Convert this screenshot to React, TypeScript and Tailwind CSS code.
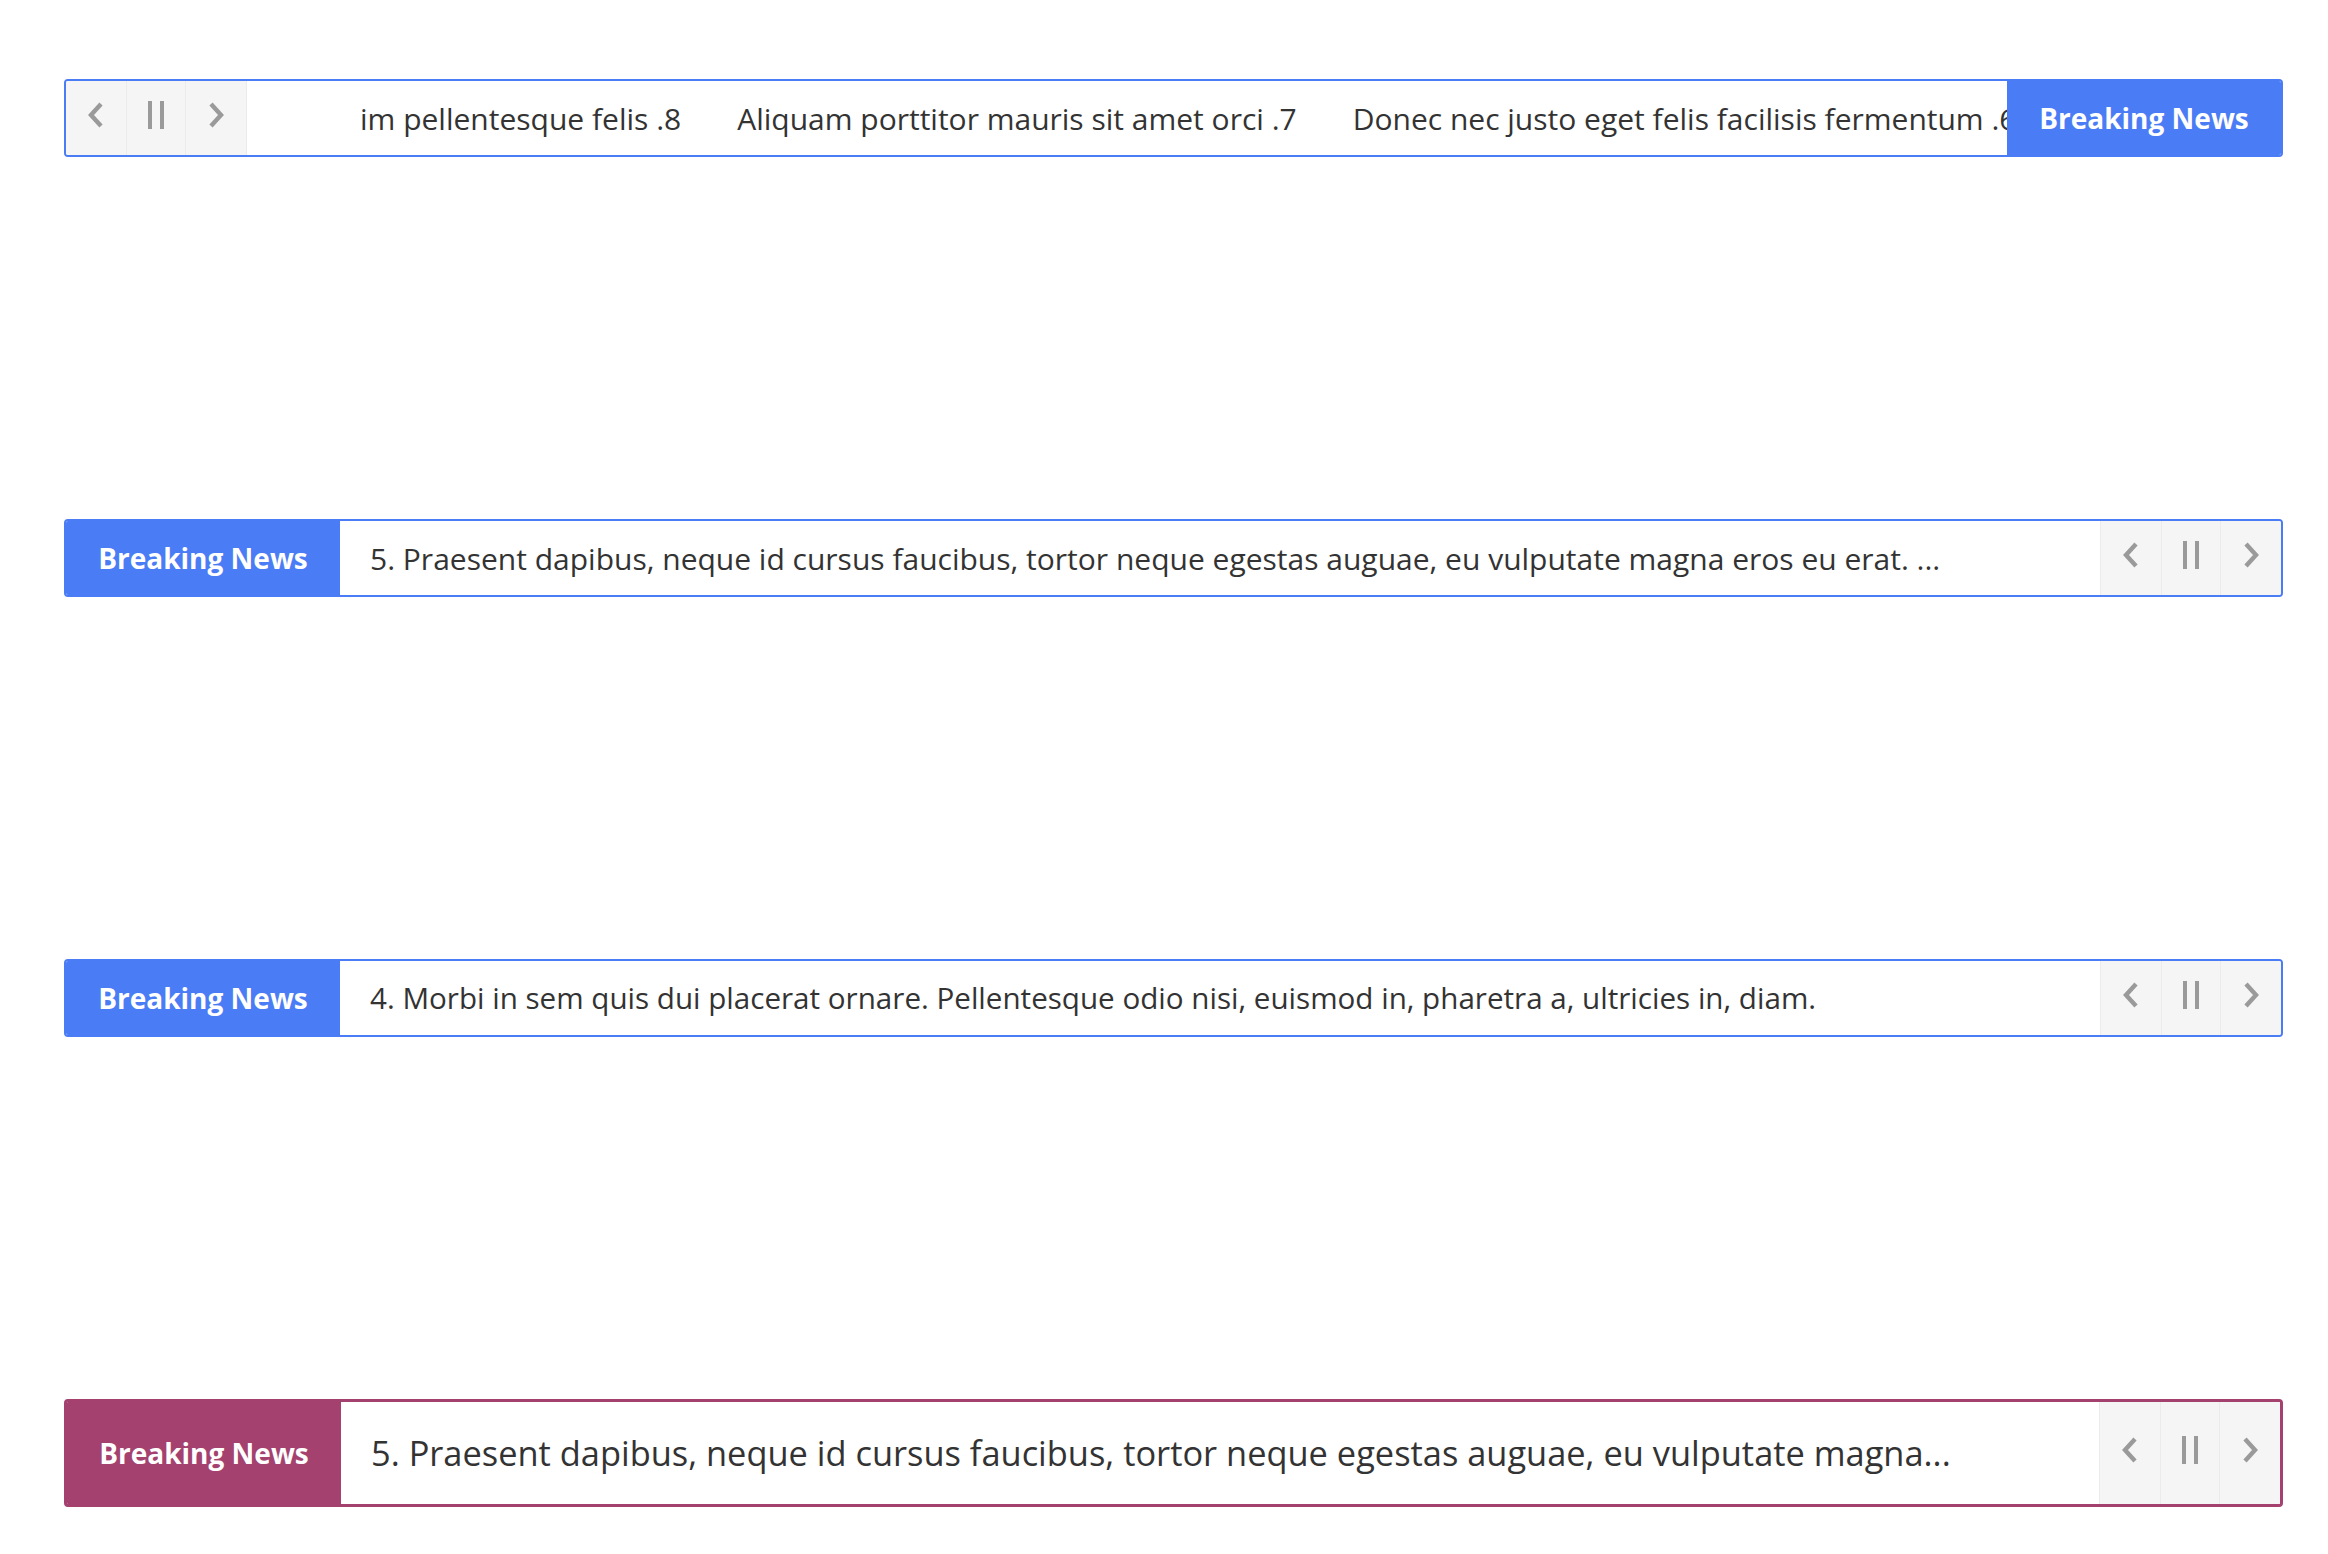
import type { ReactNode } from 'react';

const FONT = { fontFamily: '"Open Sans", "Noto Sans", sans-serif' };

function ChevronLeft() {
  return (
    <svg width="16" height="26" viewBox="0 0 16 26" fill="none">
      <polyline points="13,2 3,13 13,24" stroke="#9a9a9a" strokeWidth="4.4" />
    </svg>
  );
}

function ChevronRight() {
  return (
    <svg width="16" height="26" viewBox="0 0 16 26" fill="none">
      <polyline points="3,2 13,13 3,24" stroke="#9a9a9a" strokeWidth="4.4" />
    </svg>
  );
}

function PauseIcon() {
  return (
    <svg width="16" height="28" viewBox="0 0 16 28">
      <rect x="0" y="0" width="4" height="28" fill="#9a9a9a" />
      <rect x="12" y="0" width="4" height="28" fill="#9a9a9a" />
    </svg>
  );
}

function Controls({ side }: { side: 'left' | 'right' }) {
  return (
    <div
      className={`flex h-full shrink-0 bg-[#f5f5f5] ${
        side === 'right' ? 'border-l border-[#ebebeb]' : 'border-r border-[#ebebeb]'
      }`}
    >
      <button type="button" className="flex h-full w-[60px] items-center justify-center pb-[6px]">
        <ChevronLeft />
      </button>
      <button
        type="button"
        className="flex h-full w-[60px] items-center justify-center border-x border-[#ebebeb] pb-[6px]"
      >
        <PauseIcon />
      </button>
      <button type="button" className="flex h-full w-[60px] items-center justify-center pb-[6px]">
        <ChevronRight />
      </button>
    </div>
  );
}

function Label({ bg }: { bg: string }) {
  return (
    <div
      className={`flex h-full w-[274px] shrink-0 items-center justify-center text-[28px] font-bold text-white ${bg}`}
    >
      Breaking News
    </div>
  );
}

type TickerProps = {
  frame: string;
  children: ReactNode;
};

function Ticker({ frame, children }: TickerProps) {
  return (
    <div className={`flex w-full overflow-hidden rounded-[4px] bg-white ${frame}`}>{children}</div>
  );
}

export default function App() {
  return (
    <div className="min-h-[1554px] w-full bg-white pl-[64px] pr-[45px] pt-[79px] text-[#333]" style={FONT}>
      <div className="h-[440px]">
        <Ticker frame="h-[78px] border-2 border-[#4a7cf5]">
          <Controls side="left" />
          <div className="flex min-w-0 flex-1 items-center gap-[56px] overflow-hidden whitespace-nowrap pl-[113px] text-[30px]">
            <span className="shrink-0">im pellentesque felis .8</span>
            <span className="shrink-0">Aliquam porttitor mauris sit amet orci .7</span>
            <span className="shrink-0">Donec nec justo eget felis facilisis fermentum .6</span>
          </div>
          <Label bg="bg-[#4a7cf5]" />
        </Ticker>
      </div>

      <div className="h-[440px]">
        <Ticker frame="h-[78px] border-2 border-[#4a7cf5]">
          <Label bg="bg-[#4a7cf5]" />
          <div className="flex min-w-0 flex-1 items-center overflow-hidden whitespace-nowrap pl-[30px] text-[30px]">
            5. Praesent dapibus, neque id cursus faucibus, tortor neque egestas auguae, eu vulputate magna eros eu erat. ...
          </div>
          <Controls side="right" />
        </Ticker>
      </div>

      <div className="h-[440px]">
        <Ticker frame="h-[78px] border-2 border-[#4a7cf5]">
          <Label bg="bg-[#4a7cf5]" />
          <div className="flex min-w-0 flex-1 items-center overflow-hidden whitespace-nowrap pl-[30px] text-[29.6px]">
            4. Morbi in sem quis dui placerat ornare. Pellentesque odio nisi, euismod in, pharetra a, ultricies in, diam.
          </div>
          <Controls side="right" />
        </Ticker>
      </div>

      <div>
        <Ticker frame="h-[108px] border-[3px] border-[#a4416f]">
          <Label bg="bg-[#a4416f]" />
          <div className="flex min-w-0 flex-1 items-center overflow-hidden whitespace-nowrap pl-[30px] text-[34.4px]">
            5. Praesent dapibus, neque id cursus faucibus, tortor neque egestas auguae, eu vulputate magna...
          </div>
          <Controls side="right" />
        </Ticker>
      </div>
    </div>
  );
}
